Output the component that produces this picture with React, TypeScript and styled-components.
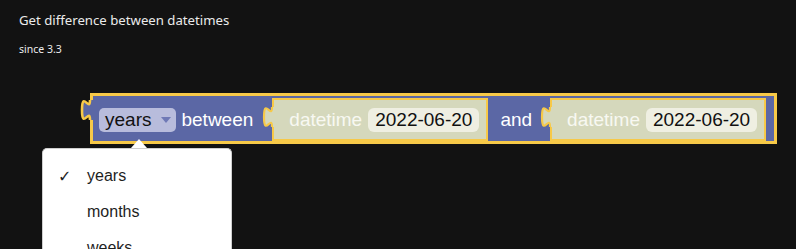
import React from "react";
import styled, { createGlobalStyle } from "styled-components";

const BG = "#121212";
const BLOCK_BLUE = "#5b67a5";
const BLOCK_OLIVE = "#d5d8bc";
const EDGE = "#f7c948";
const BLOCK_FONT = `"Liberation Sans", Arial, sans-serif`;

const GlobalStyle = createGlobalStyle`
  html, body {
    margin: 0;
    padding: 0;
    background: ${BG};
    overflow: hidden;
  }
  body {
    width: 796px;
    height: 249px;
  }
`;

const Page = styled.div`
  padding: 10px 19px 0;
  font-family: "Noto Sans", "Open Sans", sans-serif;
  color: #ebebeb;
`;

const Title = styled.div`
  font-size: 13.2px;
  line-height: 20px;
`;

const Since = styled.div`
  margin-top: 12px;
  font-size: 10.5px;
  line-height: 14px;
`;

const Canvas = styled.div`
  position: relative;
  margin: 37px 0 0 -19px;
  padding-left: 90px;
  height: 150px;
`;

const Block = styled.div<{ $tone: "blue" | "olive"; $border: number }>`
  position: relative;
  box-sizing: border-box;
  display: flex;
  align-items: center;
  background: ${(p) => (p.$tone === "blue" ? BLOCK_BLUE : BLOCK_OLIVE)};
  border: ${(p) => p.$border}px solid ${EDGE};
  font-family: ${BLOCK_FONT};
  font-size: 19px;
  white-space: nowrap;
`;

const Outer = styled(Block)`
  display: inline-flex;
  height: 51px;
  padding: 2px 8px 0 6px;
`;

const Inner = styled(Block)<{ $gap?: number }>`
  height: 43px;
  padding: 0 7px 0 15px;
  margin-left: ${(p) => p.$gap ?? 0}px;
`;

const Tab = styled.svg<{ $left: number; $top: number }>`
  position: absolute;
  left: ${(p) => p.$left}px;
  top: ${(p) => p.$top}px;
  overflow: visible;
`;

const Label = styled.span<{ $gap?: number; $light?: boolean }>`
  margin-left: ${(p) => p.$gap ?? 0}px;
  color: ${(p) => (p.$light ? "#f8f8f2" : "#ffffff")};
  line-height: 24px;
`;

const Dropdown = styled.span`
  display: inline-flex;
  align-items: center;
  height: 24px;
  padding: 0 5px 0 6px;
  border-radius: 5px;
  background: #b8bcdc;
  color: #111;
  line-height: 24px;
`;

const Caret = styled.svg`
  margin-left: 10px;
`;

const Field = styled.span`
  display: inline-flex;
  align-items: center;
  height: 24px;
  margin-left: 6px;
  padding: 0 7px;
  border-radius: 6px;
  background: #efefe2;
  color: #111;
`;

const Menu = styled.div`
  position: absolute;
  left: 42px;
  top: 55px;
  width: 190px;
  height: 110px;
  box-sizing: border-box;
  padding-top: 9px;
  background: #fff;
  border: 1px solid #cfcfcf;
  border-bottom: none;
  border-radius: 5px 5px 0 0;
  overflow: hidden;
  font-family: ${BLOCK_FONT};
  font-size: 16px;
  color: #1e1e1e;
`;

const MenuArrow = styled.div`
  position: absolute;
  left: 131px;
  top: 46px;
  border-left: 8px solid transparent;
  border-right: 8px solid transparent;
  border-bottom: 9px solid #fff;
`;

const MenuItem = styled.div`
  display: flex;
  align-items: center;
  height: 36px;
`;

const Check = styled.span`
  width: 44px;
  padding-left: 15px;
  box-sizing: border-box;
  font-family: "DejaVu Sans", sans-serif;
  font-size: 16px;
`;

const TAB_CURVE = "M 0 0 c 0 10 -8 -8 -8 7.5 s 8 -2.5 8 7.5";

function PuzzleTab({
  top,
  border,
  fill,
}: {
  top: number;
  border: number;
  fill: string;
}) {
  const h = 20;
  return (
    <Tab $left={-10 - border} $top={top} width={12 + border} height={h + 2}>
      <g transform={`translate(10 1) scale(1 ${h / 15})`}>
        <path d={`${TAB_CURVE} h ${border + 1} v -15 z`} fill={fill} />
        <path
          d={TAB_CURVE}
          fill="none"
          stroke={EDGE}
          strokeWidth={border === 3 ? 2.6 : 2.2}
          vectorEffect="non-scaling-stroke"
        />
      </g>
    </Tab>
  );
}

function DateBlock({ gap }: { gap: number }) {
  return (
    <Inner $tone="olive" $border={2} $gap={gap}>
      <PuzzleTab top={6} border={2} fill={BLOCK_OLIVE} />
      <Label $light>datetime</Label>
      <Field>2022-06-20</Field>
    </Inner>
  );
}

const units = ["years", "months", "weeks"];

export default function App() {
  return (
    <>
      <GlobalStyle />
      <Page>
        <Title>Get difference between datetimes</Title>
        <Since>since 3.3</Since>
        <Canvas>
          <Outer $tone="blue" $border={3}>
            <PuzzleTab top={3} border={3} fill={BLOCK_BLUE} />
            <Dropdown>
              years
              <Caret width="10" height="6" viewBox="0 0 10 6">
                <path d="M0 0 H10 L5 6 Z" fill="#6f79b6" />
              </Caret>
            </Dropdown>
            <Label $gap={5}>between</Label>
            <DateBlock gap={19} />
            <Label $gap={12}>and</Label>
            <DateBlock gap={18} />
          </Outer>
          <MenuArrow />
          <Menu>
            {units.map((u, i) => (
              <MenuItem key={u}>
                <Check>{i === 0 ? "✓" : ""}</Check>
                {u}
              </MenuItem>
            ))}
          </Menu>
        </Canvas>
      </Page>
    </>
  );
}
